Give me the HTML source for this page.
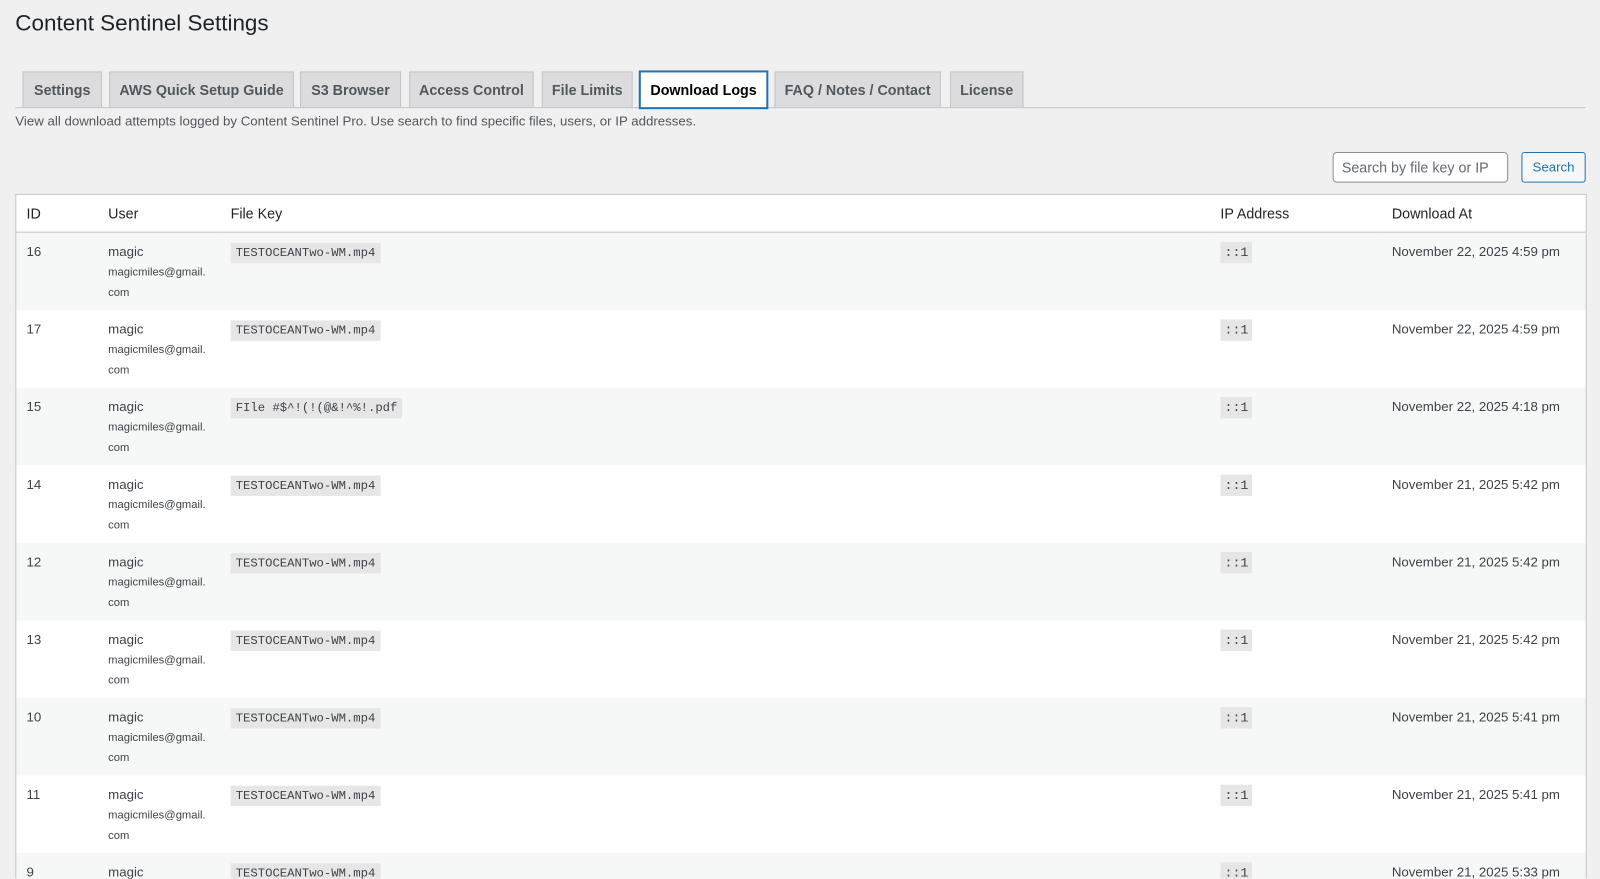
<!DOCTYPE html>
<html><head><style>
html,body{margin:0;width:1600px;height:879px;overflow:hidden;background:#f0f0f1}
#w{position:absolute;left:0;top:0;width:1568px;height:861px;overflow:hidden;transform:scale(1.0204);transform-origin:0 0;font-family:"Liberation Sans",sans-serif;color:#3c434a}
h1{position:absolute;left:15px;top:10px;margin:0;font-size:22px;font-weight:400;color:#1d2327}
.tab{position:absolute;top:70px;height:35px;border:1px solid #c3c4c7;border-bottom:none;background:#dcdcde;font-size:14px;font-weight:600;color:#50575e;line-height:35px;text-align:center;box-sizing:border-box}
.tab.a{background:#fff;color:#000;border:2px solid #2271b1;top:69px;height:38px}
.line{position:absolute;left:15px;width:1539px;top:105px;border-top:1px solid #c3c4c7}
.desc{position:absolute;left:15px;top:111px;font-size:13px;color:#50575e}
.inp{position:absolute;left:1306px;top:149px;width:172px;height:30px;box-sizing:border-box;border:1px solid #8c8f94;border-radius:4px;background:#fff;font-size:14px;color:#646970;padding:6px 8px;white-space:nowrap;overflow:hidden}
.btn{position:absolute;left:1491px;top:149px;width:63px;height:30px;box-sizing:border-box;border:1px solid #2271b1;border-radius:3px;background:#f6f7f7;color:#2271b1;font-size:13px;text-align:center;line-height:28px}
table{position:absolute;left:15px;top:190px;width:1540px;border:1px solid #c3c4c7;border-collapse:collapse;background:#fff;font-size:13px}
th{height:36px;text-align:left;font-weight:400;color:#1d2327;font-size:14px;border-bottom:1px solid #c3c4c7;padding:0 0 0 10px}
td{height:76px;vertical-align:top;padding:9px 0 0 10px;box-sizing:border-box;line-height:20px}
tr.o td{background:#f6f7f7}
code{font-family:"Liberation Mono",monospace;background:#e6e6e6;font-size:12px;padding:3px 5px;color:#3c434a}
code.ip{font-size:13px;padding:3px 4px}
.em{font-size:11px;line-height:20px}
</style></head><body><div id="w">
<h1>Content Sentinel Settings</h1>
<div class="tab" style="left:22px;width:78px">Settings</div>
<div class="tab" style="left:107px;width:181px">AWS Quick Setup Guide</div>
<div class="tab" style="left:294px;width:99px">S3 Browser</div>
<div class="tab" style="left:401px;width:122px">Access Control</div>
<div class="tab" style="left:531px;width:89px">File Limits</div>
<div class="line"></div>
<div class="tab a" style="left:626px;width:127px">Download Logs</div>
<div class="tab" style="left:759px;width:163px">FAQ / Notes / Contact</div>
<div class="tab" style="left:931px;width:72px">License</div>
<div class="desc">View all download attempts logged by Content Sentinel Pro. Use search to find specific files, users, or IP addresses.</div>
<div class="inp">Search by file key or IP</div>
<div class="btn">Search</div>
<table>
<tr><th style="width:70px">ID</th><th style="width:110px">User</th><th>File Key</th><th style="width:158px">IP Address</th><th style="width:190px">Download At</th></tr>
<tr class="o"><td>16</td><td>magic<div class="em">magicmiles@gmail.<br>com</div></td><td><code>TESTOCEANTwo-WM.mp4</code></td><td><code class="ip">::1</code></td><td>November 22, 2025 4:59 pm</td></tr>
<tr><td>17</td><td>magic<div class="em">magicmiles@gmail.<br>com</div></td><td><code>TESTOCEANTwo-WM.mp4</code></td><td><code class="ip">::1</code></td><td>November 22, 2025 4:59 pm</td></tr>
<tr class="o"><td>15</td><td>magic<div class="em">magicmiles@gmail.<br>com</div></td><td><code>FIle #$^!(!(@&amp;!^%!.pdf</code></td><td><code class="ip">::1</code></td><td>November 22, 2025 4:18 pm</td></tr>
<tr><td>14</td><td>magic<div class="em">magicmiles@gmail.<br>com</div></td><td><code>TESTOCEANTwo-WM.mp4</code></td><td><code class="ip">::1</code></td><td>November 21, 2025 5:42 pm</td></tr>
<tr class="o"><td>12</td><td>magic<div class="em">magicmiles@gmail.<br>com</div></td><td><code>TESTOCEANTwo-WM.mp4</code></td><td><code class="ip">::1</code></td><td>November 21, 2025 5:42 pm</td></tr>
<tr><td>13</td><td>magic<div class="em">magicmiles@gmail.<br>com</div></td><td><code>TESTOCEANTwo-WM.mp4</code></td><td><code class="ip">::1</code></td><td>November 21, 2025 5:42 pm</td></tr>
<tr class="o"><td>10</td><td>magic<div class="em">magicmiles@gmail.<br>com</div></td><td><code>TESTOCEANTwo-WM.mp4</code></td><td><code class="ip">::1</code></td><td>November 21, 2025 5:41 pm</td></tr>
<tr><td>11</td><td>magic<div class="em">magicmiles@gmail.<br>com</div></td><td><code>TESTOCEANTwo-WM.mp4</code></td><td><code class="ip">::1</code></td><td>November 21, 2025 5:41 pm</td></tr>
<tr class="o"><td>9</td><td>magic<div class="em">magicmiles@gmail.<br>com</div></td><td><code>TESTOCEANTwo-WM.mp4</code></td><td><code class="ip">::1</code></td><td>November 21, 2025 5:33 pm</td></tr>
</table>
</div></body></html>
